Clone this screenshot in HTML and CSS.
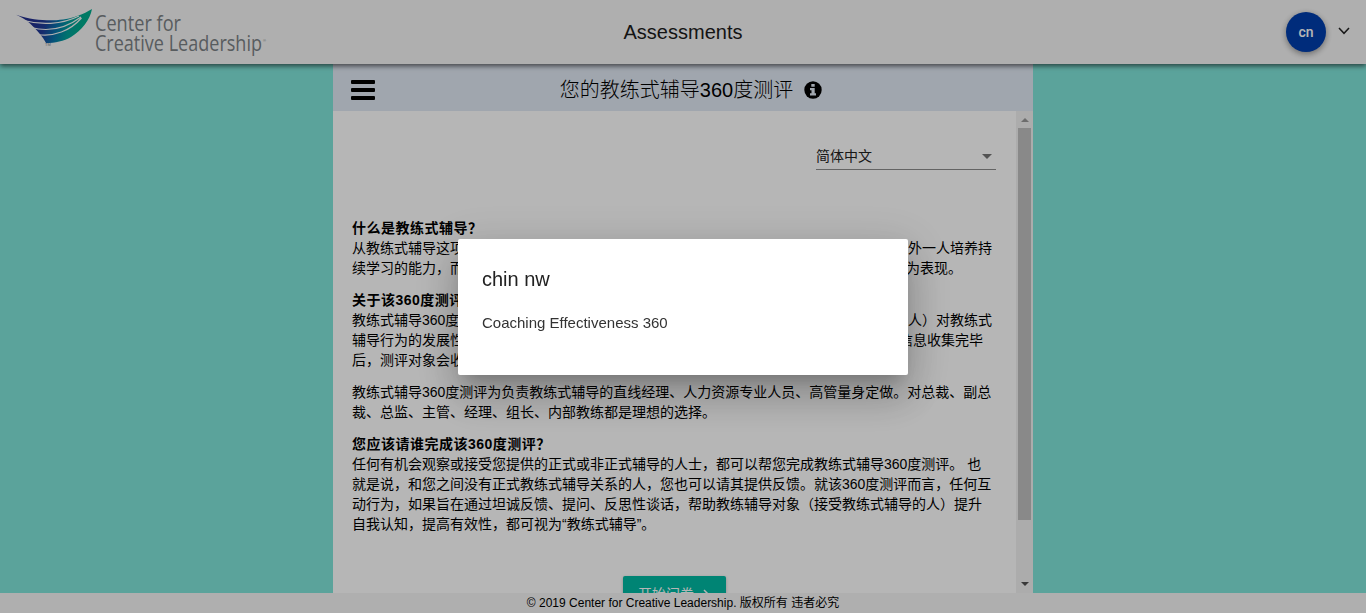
FILE: index.html
```html
<!DOCTYPE html>
<html lang="zh-CN">
<head>
<meta charset="utf-8">
<title>Assessments</title>
<link rel="stylesheet" href="styles.css">
</head>
<body>
<div class="app">
  <header class="topbar">
    <svg class="logo" width="270" height="64" viewBox="0 0 270 64">
      <defs><linearGradient id="wing" gradientUnits="userSpaceOnUse" x1="34" y1="20" x2="80" y2="32"><stop offset="0" stop-color="#24308f"/><stop offset=".24" stop-color="#1f3c98"/><stop offset=".5" stop-color="#0873aa"/><stop offset=".75" stop-color="#00a09b"/><stop offset="1" stop-color="#00ab8c"/></linearGradient></defs>
      <path fill="url(#wing)" d="M16 14.800C30 19.500 42 20.500 53 20.300C63 20 70 18.500 77 16C83 14 88 11.500 92 9C90 20 82 30 71 37C64 41 55 43 46 43C43 37 37 30 30 23.500C26 19.500 21 17 16 14.800Z"/>
      <path d="M24 20.500C40 25 61 25 79 16M31 27.500C48 32 65 29 81 17M37.500 34.500C54 37 70 31 81.500 18" fill="none" stroke="#f6f6f6" stroke-width="1.200"/>
      <text class="logo-mark" x="45" y="46">TM</text>
      <text class="logo-text" x="95" y="30.500" textLength="86" lengthAdjust="spacingAndGlyphs">Center for</text>
      <text class="logo-text" x="95" y="50.500" textLength="167" lengthAdjust="spacingAndGlyphs">Creative Leadership</text>
      <text class="logo-mark" x="263" y="42">®</text>
    </svg>
    <h1 class="title">Assessments</h1>
    <div class="account">
      <span class="avatar">cn</span>
      <svg class="chevron" width="12" height="8" viewBox="0 0 12 8"><path d="M1 1L6 6.300L11 1" fill="none" stroke="#222" stroke-width="1.500"/></svg>
    </div>
  </header>

  <main class="panel">
    <div class="panel-head">
      <div class="menu"><i></i><i></i><i></i></div>
      <h2 class="panel-title">您的教练式辅导360度测评
        <svg width="18" height="18" viewBox="0 0 18 18"><circle cx="9" cy="9" r="8.700"/><path d="M7.300 3h3.400v2.700H7.300zM6 7h4.700v5.300H12v2.200H6v-2.200h1.500V9.200H6z" fill="#e1e9f4"/></svg>
      </h2>
    </div>
    <div class="panel-body">
      <div class="content">
        <div class="select"><span>简体中文</span><i class="caret"></i></div>
        <article class="text">
          <section>
            <h3>什么是教练式辅导？</h3>
            <p class="split"><span>从教练式辅导这项</span><span>外一人培养持</span></p>
            <p class="split end-32"><span>续学习的能力，而</span><span>为表现。</span></p>
          </section>
          <section>
            <h3>关于该360度测评</h3>
            <p class="split"><span>教练式辅导360度</span><span>人）对教练式</span></p>
            <p class="split end-9"><span>辅导行为的发展性</span><span>信息收集完毕</span></p>
            <p>后，测评对象会收</p>
          </section>
          <section>
            <p>教练式辅导360度测评为负责教练式辅导的直线经理、人力资源专业人员、高管量身定做。对总裁、副总<br>裁、总监、主管、经理、组长、内部教练都是理想的选择。</p>
          </section>
          <section>
            <h3>您应该请谁完成该360度测评？</h3>
            <p>任何有机会观察或接受您提供的正式或非正式辅导的人士，都可以帮您完成教练式辅导360度测评。 也<br>就是说，和您之间没有正式教练式辅导关系的人，您也可以请其提供反馈。就该360度测评而言，任何互<br>动行为，如果旨在通过坦诚反馈、提问、反思性谈话，帮助教练辅导对象（接受教练式辅导的人）提升<br>自我认知，提高有效性，都可视为<span class="latin">“</span>教练式辅导<span class="latin">”</span>。</p>
          </section>
        </article>
        <button class="start">开始问卷<svg width="7" height="11" viewBox="0 0 7 11"><path d="M1 1L5.500 5.500L1 10" fill="none" stroke="#fff" stroke-width="1.500"/></svg></button>
      </div>
      <div class="scroll"><i class="up"></i><div class="thumb"></div><i class="down"></i></div>
    </div>
  </main>

  <footer class="footer">© 2019 Center for Creative Leadership. 版权所有 违者必究</footer>
</div>

<div class="overlay">
  <div class="dialog">
    <h2>chin nw</h2>
    <p>Coaching Effectiveness 360</p>
  </div>
</div>
</body>
</html>
```

FILE: styles.css
```css
* { box-sizing: border-box; }
body, h1, h2, h3, p { margin: 0; }
body {
  font-family: "Liberation Sans", "Noto Sans CJK SC", sans-serif;
  font-size: 14px;
  color: #000;
  overflow: hidden;
}
.app {
  height: 613px;
  display: flex;
  flex-direction: column;
  align-items: center;
  background: #80e5da;
}
.topbar {
  width: 100%;
  height: 64px;
  flex: none;
  display: grid;
  grid-template-columns: 1fr auto 1fr;
  align-items: center;
  background: #f6f6f6;
  box-shadow: 0 2px 5px rgba(0, 0, 0, .6);
  z-index: 1;
}
.logo { display: block; }
.logo-text { font: 400 21px "Open Sans", sans-serif; fill: #7c8286; }
.logo-mark { font: 4px "Liberation Sans", sans-serif; fill: #7c8286; }
.title { font-size: 20px; font-weight: 400; color: #1c1c1c; }
.account {
  justify-self: end;
  display: flex;
  align-items: center;
  gap: 12px;
  padding-right: 16px;
}
.avatar {
  width: 40px;
  height: 40px;
  border-radius: 50%;
  background: #003ead;
  color: #fff;
  font: 500 14px/40px Roboto, sans-serif;
  text-align: center;
  box-shadow: 0 2px 6px rgba(0, 0, 0, .4);
}
.chevron { margin-bottom: 3px; }
.panel {
  width: 700px;
  flex: 1;
  min-height: 0;
  display: flex;
  flex-direction: column;
}
.panel-head {
  height: 47px;
  flex: none;
  display: grid;
  grid-template-columns: 60px 1fr 60px;
  align-items: center;
  padding: 4px 0 0 18px;
  background: #e1e9f4;
}
.menu { width: 24px; display: grid; gap: 4px; }
.menu i { height: 4px; border-radius: 1px; background: #000; }
.panel-title {
  display: flex;
  align-items: center;
  justify-content: center;
  gap: 11px;
  padding-right: 2px;
  font-size: 20px;
  line-height: 28px;
  font-weight: 300;
}
.panel-body { flex: 1; min-height: 0; display: flex; background: #fff; }
.content {
  flex: 1;
  overflow: hidden;
  display: flex;
  flex-direction: column;
  padding: 32px 20px 0 19px;
}
.select {
  align-self: flex-end;
  flex: none;
  width: 180px;
  height: 27px;
  display: flex;
  align-items: center;
  justify-content: space-between;
  padding: 0 4px 2px 0;
  border-bottom: 1px solid #8d8d8d;
  color: #222;
}
.caret {
  margin-top: 2px;
  border: 5px solid transparent;
  border-top-color: #757575;
  border-bottom: 0;
}
.text {
  flex: none;
  margin-top: 48px;
  width: 640px;
  display: grid;
  gap: 12px;
  line-height: 20px;
  white-space: nowrap;
}
.text h3 { font-size: 14px; font-weight: 700; line-height: 20px; letter-spacing: .5px; }
.split { display: flex; justify-content: space-between; }
.end-32 { padding-right: 30px; }
.end-9 { padding-right: 9px; }
.latin { font-family: "Liberation Sans", sans-serif; }
.start {
  align-self: center;
  flex: none;
  width: 103px;
  height: 36px;
  margin: 42px 0 0 0;
  padding: 0 0 2px;
  display: flex;
  align-items: center;
  justify-content: center;
  gap: 9px;
  border: 0;
  border-radius: 2px;
  background: #00b9a3;
  color: #fff;
  font: 14px "Liberation Sans", "Noto Sans CJK SC", sans-serif;
  box-shadow: 0 1px 3px rgba(0, 0, 0, .25);
}
.start svg { margin-top: 3px; }
.scroll {
  width: 17px;
  flex: none;
  display: flex;
  flex-direction: column;
  align-items: center;
  background: #f1f1f1;
}
.up { margin-top: 7px; border: 4px solid transparent; border-top: 0; border-bottom-color: #999; }
.thumb { width: 13px; height: 392px; margin-top: 6px; background: #c1c1c1; }
.down { margin-top: 62px; border: 4px solid transparent; border-bottom: 0; border-top-color: #505050; }
.footer {
  width: 100%;
  height: 20px;
  flex: none;
  background: #f5f5f5;
  font-size: 12px;
  line-height: 20px;
  text-align: center;
}
.overlay {
  position: fixed;
  inset: 0;
  z-index: 2;
  display: grid;
  place-content: center;
  background: rgba(0, 0, 0, .288);
}
.dialog {
  width: 450px;
  height: 136px;
  padding: 24px;
  background: #fff;
  border-radius: 2px;
  box-shadow: 0 11px 15px -7px rgba(0, 0, 0, .2), 0 24px 38px 3px rgba(0, 0, 0, .14), 0 9px 46px 8px rgba(0, 0, 0, .12);
}
.dialog h2 { font-size: 20px; line-height: 32px; font-weight: 400; color: #222; }
.dialog p { margin-top: 18px; font-size: 15px; line-height: 20px; color: #333; }
```
